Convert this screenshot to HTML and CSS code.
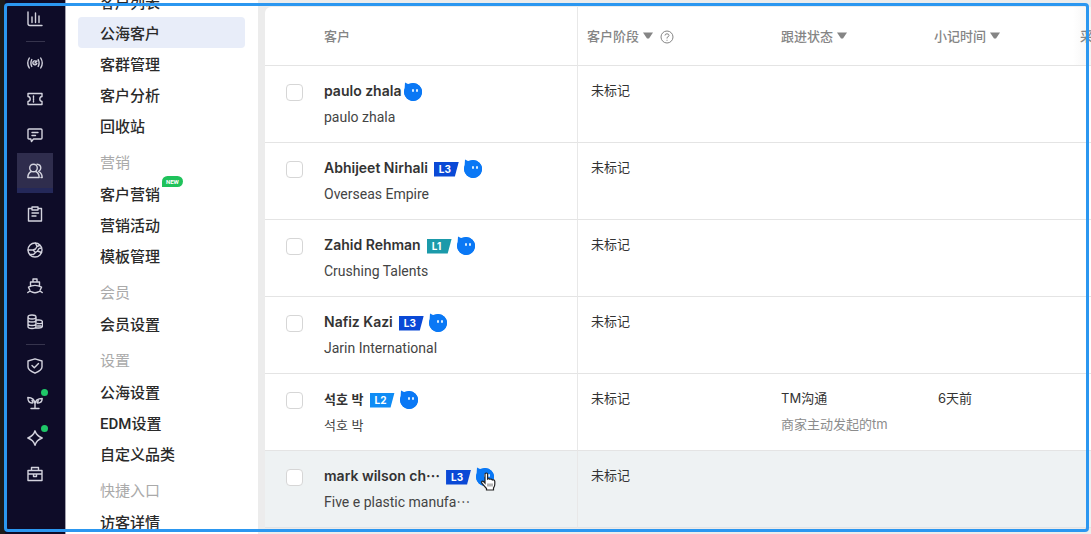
FILE: index.html
```
<!DOCTYPE html>
<html lang="zh-CN">
<head>
    <meta charset="UTF-8">
    <meta name="viewport" content="width=device-width, initial-scale=1.0">
    <title>公海客户</title>
    <link rel="stylesheet" href="styles.css">
</head>
<body>
    <!-- Shared shapes -->
    <svg width="0" height="0" class="defs" aria-hidden="true">
        <symbol id="face" viewBox="0 0 18 20">
            <path d="M1 1.500L4 3L9 2A9 9 0 1 1 0.600 8Z" fill="#0a78f5"/>
            <circle cx="9" cy="11" r="9" fill="#0a78f5"/>
            <rect x="8" y="8" width="2" height="3" rx="1" fill="#d8ecff"/>
            <rect x="12" y="8" width="2" height="3" rx="1" fill="#d8ecff"/>
        </symbol>
        <symbol id="arrow" viewBox="0 0 10 7">
            <path d="M0 0.500H10L6 6.500H4Z" fill="#858585"/>
        </symbol>
    </svg>

    <nav class="rail">
        <a href="#" class="rail-item"><svg viewBox="0 0 16 16"><path d="M1 1V12.500Q1 14.500 3 14.500H15M5 6V11.500M8.500 2V11.500M12 5V11.500"/></svg></a>
        <hr>
        <a href="#" class="rail-item"><svg viewBox="0 0 16 16"><path d="M9 6.200A2 2 0 1 0 9.800 8.500M8 8L10 6M4.800 4.500Q3 8 4.800 11.500M11.200 4.500Q13 8 11.200 11.500M2.300 3Q-0.800 8 2.300 13M13.700 3Q16.800 8 13.700 13"/></svg></a>
        <a href="#" class="rail-item"><svg viewBox="0 0 16 16"><path d="M1 2.500H15V5.500Q12.800 5.800 12.800 8T15 10.500V13.500H1V10.500Q3.200 10.200 3.200 8T1 5.500Z"/><path d="M6.500 5V11" stroke-dasharray="1.500 1"/></svg></a>
        <a href="#" class="rail-item"><svg viewBox="0 0 16 16"><path d="M2 2H14Q15 2 15 3V11Q15 12 14 12H6.500L4.500 14.500L3.800 12H2Q1 12 1 11V3Q1 2 2 2ZM5 5.500H11M5 8.500H8.500"/></svg></a>
        <a href="#" class="rail-item active"><svg viewBox="0 0 16 16"><circle cx="6.500" cy="5" r="3.800"/><path d="M4.300 8.500Q1 10 0.800 14.500H12.200Q12 10 8.700 8.500M10 1.200Q13.800 1.500 13.800 5Q13.800 7 11.700 8.300Q15 10 15.200 14.500H14"/></svg></a>
        <a href="#" class="rail-item"><svg viewBox="0 0 16 16"><path d="M5 2.500H1.500V15H14.500V2.500H11M5 1H11V4H5ZM5 7H11.500M5 10H9"/></svg></a>
        <a href="#" class="rail-item"><svg viewBox="0 0 16 16"><circle cx="8" cy="8" r="7"/><path d="M1.200 8L6 8L8.500 10.500L6.500 12.500L3 12.500M6 8L8.500 7L10 4.500L8.500 1.200M10 4.500L12.500 3.500M8.500 10.500L10.500 9L12 6.500L14.500 6M10.500 9L14.500 10.500"/></svg></a>
        <a href="#" class="rail-item"><svg viewBox="0 0 16 16"><path d="M6 4V1H10V4M3.500 8V4H12.500V8M3 12.500L1.500 9.200Q8 5.500 14.500 9.200L13 12.500M0.800 14.500Q3 12.500 5 14Q8 15.500 11 14Q13 12.500 15.200 14.500"/></svg></a>
        <a href="#" class="rail-item"><svg viewBox="0 0 16 16"><path d="M1 3V12.500Q1 14.500 5 14.500T9 12.500V3Q9 1 5 1T1 3Q1 5 5 5T9 3M1 6Q1 8 5 8T9 6M1 9.500Q1 11.500 5 11.500T9 9.500M9 6H12Q15.500 6 15.500 8V12Q15.500 14 12 14H9M10.500 9.500Q15.500 10 15.500 8M10.500 12H14"/></svg></a>
        <hr>
        <a href="#" class="rail-item"><svg viewBox="0 0 16 16"><path d="M8 0.800L15 3V9Q15 12 8 15.200Q1 12 1 9V3ZM5 7.500L7.300 9.800L11.500 5.500"/></svg></a>
        <a href="#" class="rail-item"><svg viewBox="0 0 16 16"><path d="M8 14.500V10Q7.500 3.500 0.800 3.500Q1 9 5 9Q7 9 5 6.500M8 10Q8.500 4.500 15.200 4.500Q15 9 11 9Q9 9 11.500 6.800M4 14.500H12"/></svg><i class="dot"></i></a>
        <a href="#" class="rail-item"><svg viewBox="0 0 16 16"><path d="M8 0.800Q9.500 6 15.200 8Q9.500 10 8 15.200Q6.500 10 0.800 8Q6.500 6 8 0.800Z"/></svg><i class="dot"></i></a>
        <a href="#" class="rail-item"><svg viewBox="0 0 16 16"><path d="M1 4.500H15V14.500H1ZM4.500 4.500V1.500H11.500V4.500M1 8H15M6.500 8V10.500H9.500V8"/></svg></a>
    </nav>

    <aside class="menu">
        <ul>
            <li><a href="#">客户列表</a></li>
            <li><a href="#" class="current">公海客户</a></li>
            <li><a href="#">客群管理</a></li>
            <li><a href="#">客户分析</a></li>
            <li><a href="#">回收站</a></li>
        </ul>
        <h3>营销</h3>
        <ul>
            <li><a href="#">客户营销<span class="new">NEW</span></a></li>
            <li><a href="#">营销活动</a></li>
            <li><a href="#">模板管理</a></li>
        </ul>
        <h3>会员</h3>
        <ul>
            <li><a href="#">会员设置</a></li>
        </ul>
        <h3>设置</h3>
        <ul>
            <li><a href="#">公海设置</a></li>
            <li><a href="#">EDM设置</a></li>
            <li><a href="#">自定义品类</a></li>
        </ul>
        <h3>快捷入口</h3>
        <ul>
            <li><a href="#">访客详情</a></li>
        </ul>
    </aside>

    <main>
        <table>
            <colgroup>
                <col class="col-check">
                <col class="col-name">
                <col class="col-stage">
                <col class="col-status">
                <col class="col-time">
                <col>
            </colgroup>
            <thead>
                <tr>
                    <th></th>
                    <th class="name">客户</th>
                    <th><button type="button">客户阶段<svg class="arrow"><use href="#arrow"/></svg></button><svg class="help" viewBox="0 0 14 14"><circle cx="7" cy="7" r="6"/><path d="M5 5.500Q5 3.800 7 3.800T9 5.500Q9 6.500 7 7.500V8.500M7 9.800V10.800"/></svg></th>
                    <th><button type="button">跟进状态<svg class="arrow"><use href="#arrow"/></svg></button></th>
                    <th><button type="button">小记时间<svg class="arrow"><use href="#arrow"/></svg></button></th>
                    <th class="last">采购</th>
                </tr>
            </thead>
            <tbody>
                <tr>
                    <td><input type="checkbox" aria-label="paulo zhala"></td>
                    <td class="name">
                        <div class="title"><b>paulo zhala</b><svg class="face"><use href="#face"/></svg></div>
                        <div class="company">paulo zhala</div>
                    </td>
                    <td class="stage">未标记</td>
                    <td></td>
                    <td></td>
                    <td></td>
                </tr>
                <tr>
                    <td><input type="checkbox" aria-label="Abhijeet Nirhali"></td>
                    <td class="name">
                        <div class="title"><b>Abhijeet Nirhali</b><span class="level l3">L3</span><svg class="face"><use href="#face"/></svg></div>
                        <div class="company">Overseas Empire</div>
                    </td>
                    <td class="stage">未标记</td>
                    <td></td>
                    <td></td>
                    <td></td>
                </tr>
                <tr>
                    <td><input type="checkbox" aria-label="Zahid Rehman"></td>
                    <td class="name">
                        <div class="title"><b>Zahid Rehman</b><span class="level l1">L1</span><svg class="face"><use href="#face"/></svg></div>
                        <div class="company">Crushing Talents</div>
                    </td>
                    <td class="stage">未标记</td>
                    <td></td>
                    <td></td>
                    <td></td>
                </tr>
                <tr>
                    <td><input type="checkbox" aria-label="Nafiz Kazi"></td>
                    <td class="name">
                        <div class="title"><b>Nafiz Kazi</b><span class="level l3">L3</span><svg class="face"><use href="#face"/></svg></div>
                        <div class="company">Jarin International</div>
                    </td>
                    <td class="stage">未标记</td>
                    <td></td>
                    <td></td>
                    <td></td>
                </tr>
                <tr>
                    <td><input type="checkbox" aria-label="석호 박"></td>
                    <td class="name korean" lang="ko">
                        <div class="title"><b>석호 박</b><span class="level l2">L2</span><svg class="face"><use href="#face"/></svg></div>
                        <div class="company">석호 박</div>
                    </td>
                    <td class="stage">未标记</td>
                    <td>TM沟通<div class="note">商家主动发起的tm</div></td>
                    <td class="time">6天前</td>
                    <td></td>
                </tr>
                <tr class="hovered">
                    <td><input type="checkbox" aria-label="mark wilson"></td>
                    <td class="name">
                        <div class="title"><b>mark wilson ch<span class="dots">…</span></b><span class="level l3">L3</span><span class="pointed"><svg class="face"><use href="#face"/></svg><svg class="cursor" viewBox="0 0 17 19"><path d="M5 11V2.500Q5 1 6.300 1T7.600 2.500V7Q9 6 10 7.300Q11.500 6.500 12.300 8Q14.500 7.300 14.800 9.500V12Q14.800 14.500 13.500 16V18H6.500V16.500L2 11.500Q1 10 2 9.300T5 11Z" fill="#fff" stroke="#222" stroke-width="1.200"/><path d="M8 11.500V14.500M10 11.500V14.500M12 11.500V14.500" stroke="#444" stroke-width="0.800"/></svg></span></div>
                        <div class="company">Five e plastic manufa<span class="dots">…</span></div>
                    </td>
                    <td class="stage">未标记</td>
                    <td></td>
                    <td></td>
                    <td></td>
                </tr>
            </tbody>
        </table>
    </main>

    <div class="frame"></div>
</body>
</html>
```

FILE: styles.css
```
* {
    box-sizing: border-box;
}

body {
    margin: 0;
    height: 100vh;
    display: flex;
    overflow: hidden;
    background-color: #ececec;
    color: #333;
    font-family: "Inter", "Noto Sans CJK SC", sans-serif;
    font-size: 13px;
}

a {
    color: inherit;
    text-decoration: none;
}

.defs {
    position: absolute;
}

/* Icon rail */
.rail {
    flex: none;
    width: 65px;
    padding-top: 1px;
    border-left: 5px solid #1b1b1b;
    background-color: #0e0c28;
    display: flex;
    flex-direction: column;
    align-items: center;
}

.rail hr {
    flex: none;
    width: 19px;
    height: 1px;
    margin: 4px 0 3px;
    border: none;
    background-color: #36344d;
}

.rail-item {
    flex: none;
    position: relative;
    width: 36px;
    height: 36px;
    padding: 10px;
}

.rail-item svg {
    display: block;
    width: 16px;
    height: 16px;
    fill: none;
    stroke: #d3d3de;
    stroke-width: 1.4;
    stroke-linejoin: round;
    stroke-linecap: round;
}

.rail-item.active {
    height: 40px;
    margin-bottom: 3px;
    background-color: #2f2d4d;
    border-bottom: 5px solid #242859;
}

.dot {
    position: absolute;
    top: 5px;
    right: 5px;
    width: 7px;
    height: 7px;
    border-radius: 50%;
    background-color: #1fc768;
}

/* Side menu */
.menu {
    flex: none;
    width: 193px;
    padding: 0 13px 0 12px;
    border-left: 1px solid #a3a2ae;
    background-color: #fff;
    font-family: "Roboto", "Noto Sans CJK SC", sans-serif;
    font-size: 15px;
    overflow: hidden;
}

.menu ul {
    margin: 0;
    padding: 0;
    list-style: none;
}

.menu ul:first-child {
    margin-top: -14px;
}

.menu a,
.menu h3 {
    display: flex;
    height: 31px;
    padding-left: 22px;
    align-items: center;
    border-radius: 4px;
    color: #2a2a2a;
    font-weight: 500;
}

.menu .current {
    background-color: #e8edf9;
}

.menu h3 {
    height: 33px;
    margin: 4px 0 0;
    color: #aaa;
    font-size: 15px;
    font-weight: 400;
}

.new {
    align-self: flex-start;
    height: 11px;
    margin: -2px 0 0 2px;
    padding: 0 4px;
    border-radius: 6px 6px 6px 0;
    background-color: #1fc25b;
    color: #fff;
    font-size: 6px;
    font-weight: 700;
    line-height: 11px;
}

/* Customer table */
main {
    flex: 1;
    min-width: 0;
    padding: 7px 0 0 7px;
    overflow: hidden;
}

table {
    width: 100%;
    table-layout: fixed;
    border-collapse: separate;
    border-spacing: 0;
    border-top-left-radius: 6px;
    background-color: #fff;
}

.col-check {
    width: 59px;
}

.col-name {
    width: 254px;
}

.col-stage {
    width: 194px;
}

.col-status {
    width: 153px;
}

.col-time {
    width: 148px;
}

th,
td {
    border-bottom: 1px solid #e4e4e4;
    text-align: left;
    white-space: nowrap;
}

th {
    height: 59px;
    padding: 0 0 2px 9px;
    color: #858585;
    font-weight: 500;
}

td {
    height: 77px;
    padding: 11px 0 0 9px;
    line-height: 26px;
    vertical-align: top;
}

th.name,
td.name {
    padding-left: 0;
    border-right: 1px solid #e8e8e8;
}

td.name {
    padding-top: 12px;
    font-size: 14px;
}

td.name.korean,
td.name.korean .company {
    font-family: "Noto Sans CJK KR", sans-serif;
    font-size: 13px;
}

td.stage,
td.time {
    padding-left: 13px;
}

th.last {
    padding-left: 7px;
    background-image: linear-gradient(to right, #fff, #f4f4f4);
}

th button {
    padding: 0;
    border: none;
    background: none;
    color: inherit;
    font: inherit;
}

.arrow {
    width: 10px;
    height: 7px;
    margin: 0 0 2px 4px;
}

.help {
    width: 14px;
    height: 14px;
    margin-left: 7px;
    vertical-align: middle;
    fill: none;
    stroke: #858585;
}

td input {
    appearance: none;
    display: block;
    width: 17px;
    height: 17px;
    margin: 7px 0 0 12px;
    border: 1px solid #d6d6d6;
    border-radius: 4px;
    background-color: #fff;
}

.title {
    display: flex;
    align-items: center;
}

.title b {
    margin-right: 3px;
    font-weight: 600;
}

.company {
    color: #444;
    font-family: "Roboto", "Noto Sans CJK SC", sans-serif;
}

.dots {
    font-family: "Noto Sans CJK SC", sans-serif;
    line-height: 1;
}

.level {
    width: 25px;
    height: 15px;
    margin: 2px 5px 0 3px;
    padding-left: 5px;
    clip-path: polygon(0 0, 100% 0, 84% 100%, 0 100%);
    color: #fff;
    font-family: "Inter", sans-serif;
    font-size: 10px;
    font-weight: 700;
    line-height: 15px;
}

.l1 {
    background-color: #1b9aaa;
}

.l2 {
    background-color: #0f8cf5;
}

.l3 {
    background-color: #0a49d6;
}

.face {
    display: block;
    width: 18px;
    height: 20px;
}

.pointed {
    position: relative;
}

.cursor {
    position: absolute;
    top: 6px;
    left: 4px;
    width: 17px;
    height: 19px;
    fill: none;
}

.note {
    color: #8c8c8c;
}

.hovered td {
    background-color: #eef2f3;
}

/* Highlight frame around the whole window */
.frame {
    position: fixed;
    inset: 3px 2px 2px 4px;
    border: 3px solid #2b97f0;
    border-radius: 4px;
    pointer-events: none;
}
```
